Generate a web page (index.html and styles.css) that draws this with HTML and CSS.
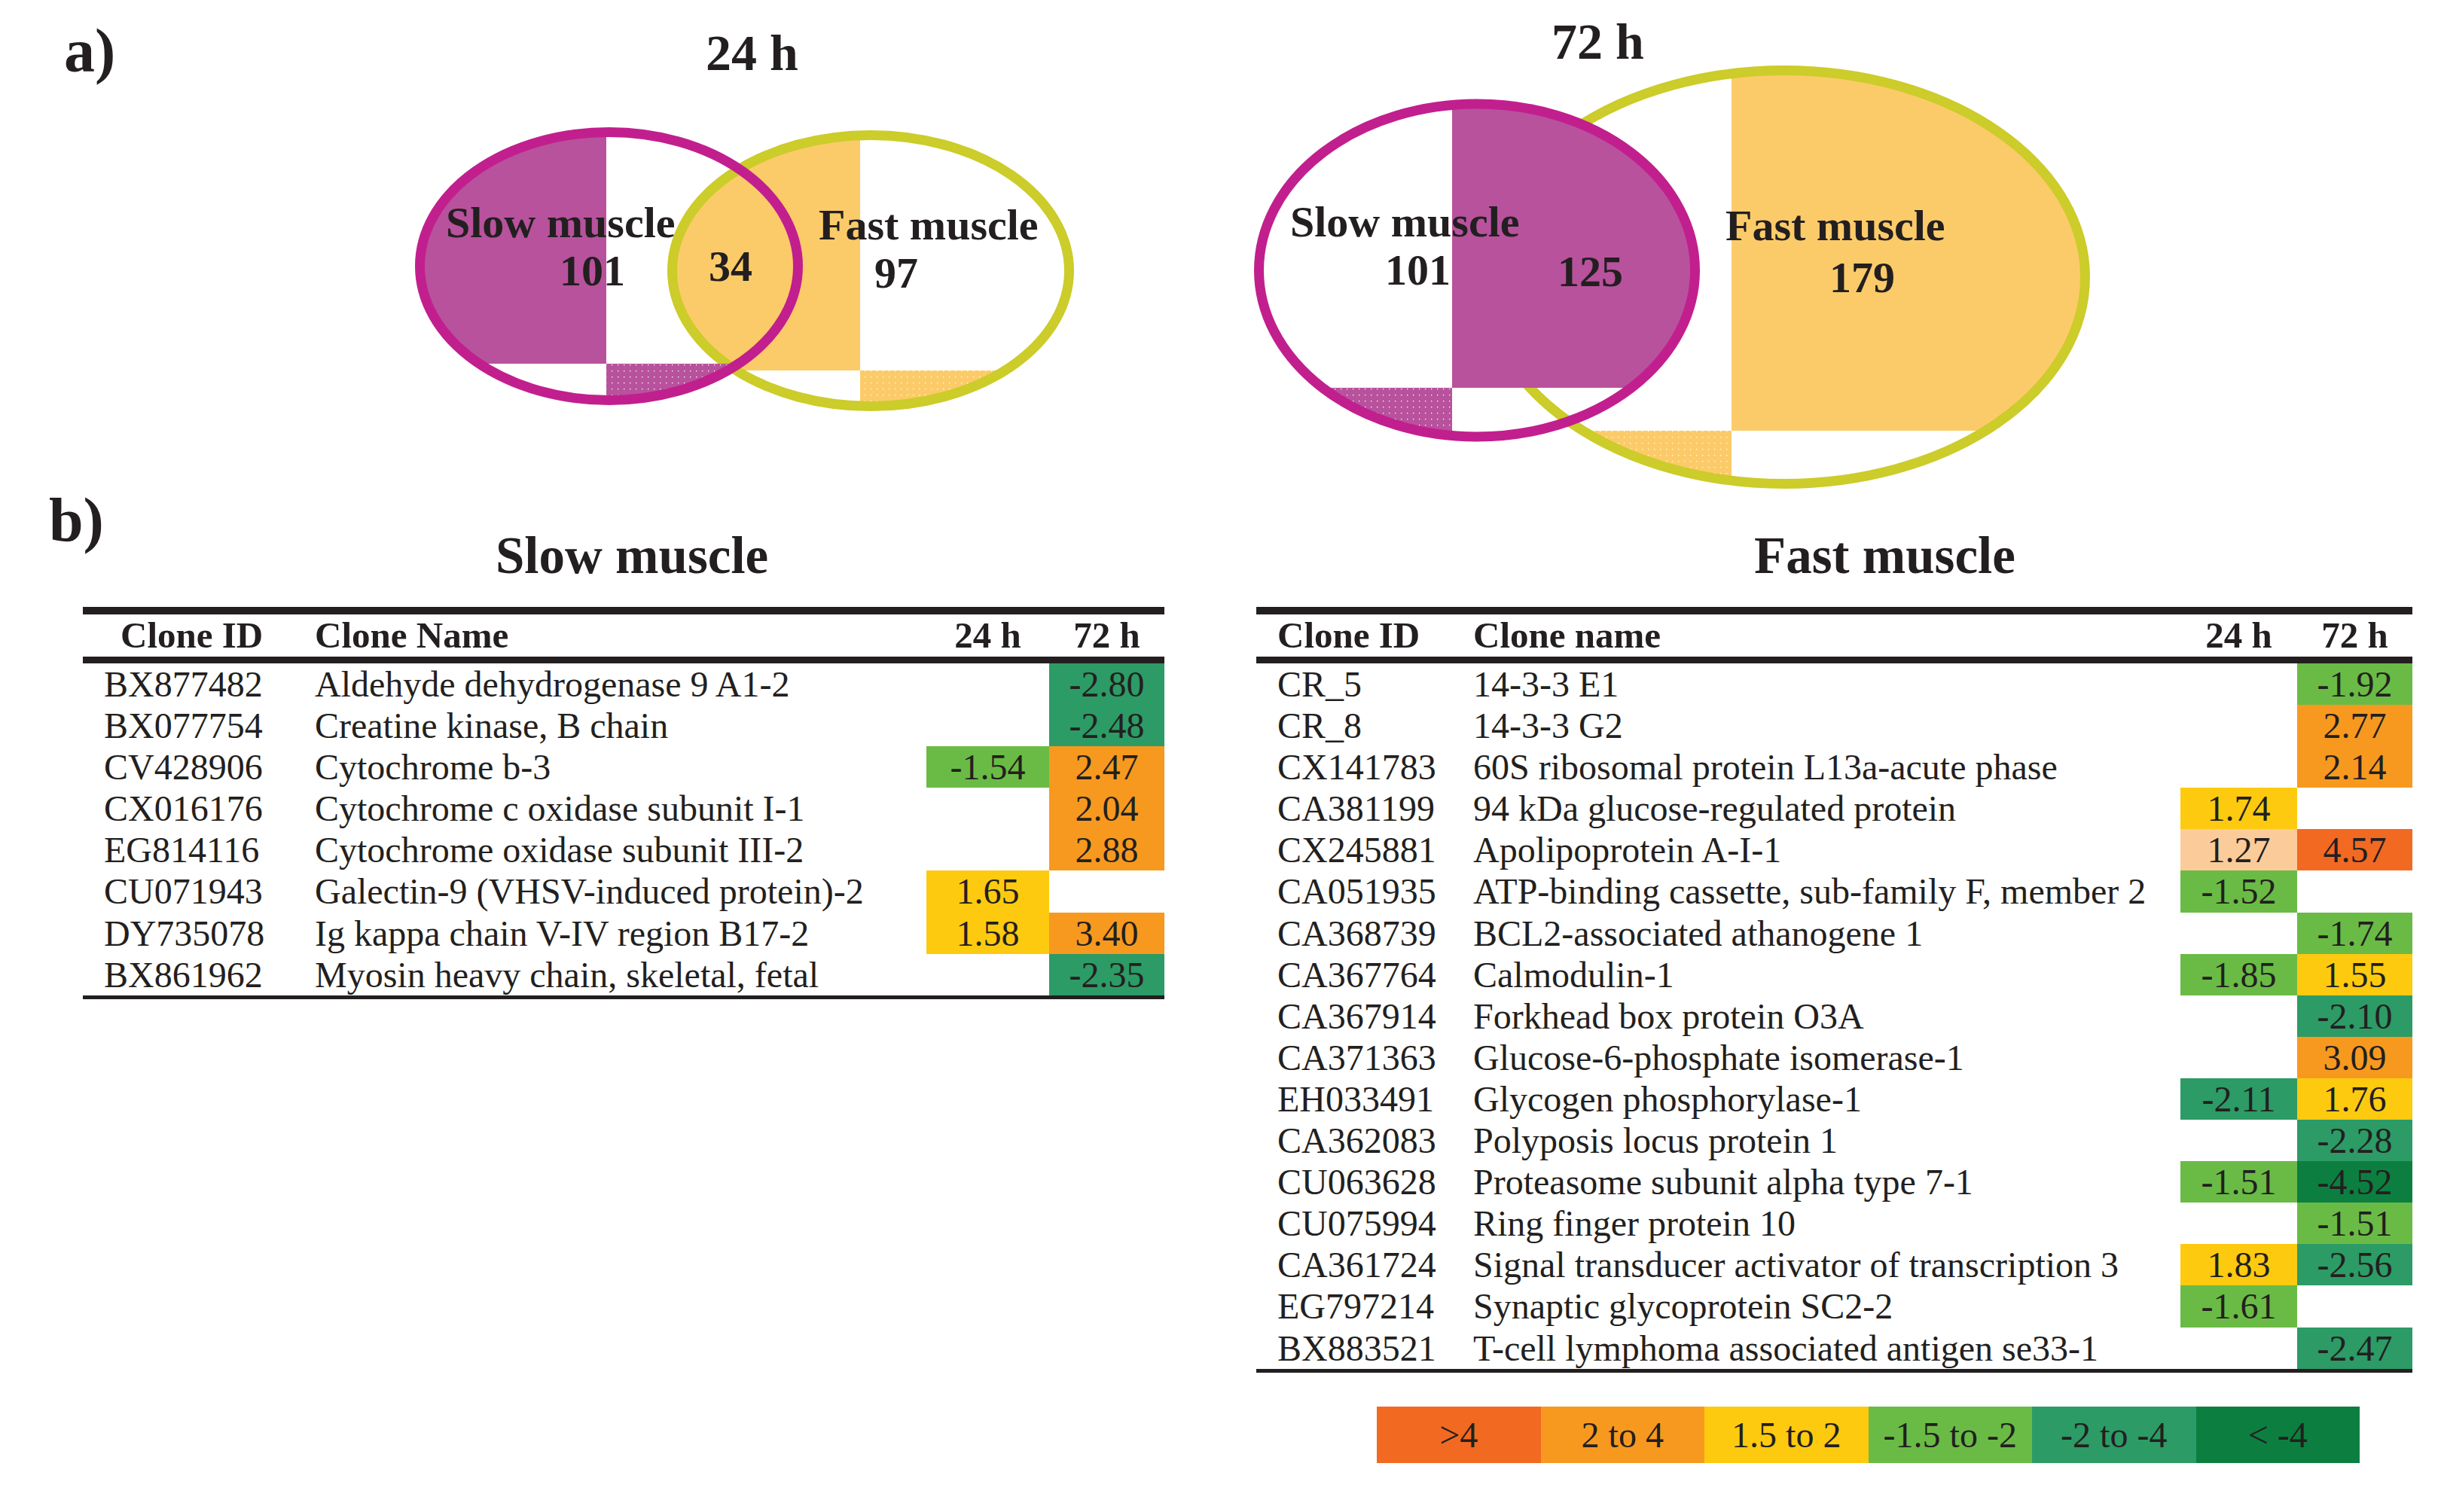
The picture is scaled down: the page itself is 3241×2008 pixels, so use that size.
FILE: index.html
```html
<!DOCTYPE html>
<html lang="en">
<head>
<meta charset="utf-8">
<title>Venn diagrams and gene expression tables</title>
<link rel="stylesheet" href="styles.css">
</head>
<body>
<div class="page">
  <section class="row-a">
    <div class="panel-label label-a">a)</div>

    <figure class="venn venn-24">
      <div class="venn-title">24 h</div>
      <div class="venn-canvas">
        <svg width="924" height="455" viewBox="540 104 924 455" xmlns="http://www.w3.org/2000/svg">
          <defs>
            <clipPath id="c24s"><ellipse cx="808.5" cy="353.5" rx="251" ry="178"/></clipPath>
            <clipPath id="c24f"><ellipse cx="1156" cy="359.5" rx="263.5" ry="180"/></clipPath>
            <pattern id="dm24" x="0" y="0" width="8" height="8" patternUnits="userSpaceOnUse">
              <rect width="8" height="8" fill="#B8529D"/>
              <rect x="4" y="4" width="1.3" height="1.3" fill="#ffffff"/>
            </pattern>
            <pattern id="do24" x="0" y="0" width="8" height="8" patternUnits="userSpaceOnUse">
              <rect width="8" height="8" fill="#FCCB69"/>
              <rect x="4" y="4" width="1.3" height="1.3" fill="#ffffff"/>
            </pattern>
          </defs>
          <g clip-path="url(#c24f)">
            <rect x="880" y="160" width="262" height="332" fill="#FCCB69"/>
            <rect x="1142" y="492" width="300" height="70" fill="url(#do24)"/>
          </g>
          <ellipse cx="1156" cy="359.5" rx="263.5" ry="180" fill="none" stroke="#CCCC2A" stroke-width="13"/>
          <g clip-path="url(#c24s)">
            <rect x="545" y="160" width="260" height="323" fill="#B8529D"/>
            <rect x="805" y="483" width="280" height="70" fill="url(#dm24)"/>
          </g>
          <ellipse cx="808.5" cy="353.5" rx="251" ry="178" fill="none" stroke="#C21F8E" stroke-width="13"/>
        </svg>
        <span class="venn-label l24-slow">Slow muscle</span>
        <span class="venn-label l24-slow-n">101</span>
        <span class="venn-label l24-both">34</span>
        <span class="venn-label l24-fast">Fast muscle</span>
        <span class="venn-label l24-fast-n">97</span>
      </div>
    </figure>

    <figure class="venn venn-72">
      <div class="venn-title">72 h</div>
      <div class="venn-canvas">
        <svg width="1150" height="562" viewBox="1650 89 1150 562" xmlns="http://www.w3.org/2000/svg">
          <defs>
            <clipPath id="c72s"><ellipse cx="1961" cy="359" rx="289.5" ry="221"/></clipPath>
            <clipPath id="c72f"><ellipse cx="2369" cy="368" rx="399.5" ry="274.5"/></clipPath>
            <pattern id="dm72" x="0" y="0" width="8" height="8" patternUnits="userSpaceOnUse">
              <rect width="8" height="8" fill="#B8529D"/>
              <rect x="4" y="4" width="1.3" height="1.3" fill="#ffffff"/>
            </pattern>
            <pattern id="do72" x="0" y="0" width="8" height="8" patternUnits="userSpaceOnUse">
              <rect width="8" height="8" fill="#FCCB69"/>
              <rect x="4" y="4" width="1.3" height="1.3" fill="#ffffff"/>
            </pattern>
          </defs>
          <g clip-path="url(#c72f)">
            <rect x="2299" y="80" width="490" height="492" fill="#FCCB69"/>
            <rect x="1960" y="572" width="339" height="90" fill="url(#do72)"/>
          </g>
          <ellipse cx="2369" cy="368" rx="399.5" ry="274.5" fill="none" stroke="#CCCC2A" stroke-width="13"/>
          <g clip-path="url(#c72s)">
            <rect x="1928" y="125" width="345" height="390" fill="#B8529D"/>
            <rect x="1660" y="515" width="268" height="80" fill="url(#dm72)"/>
          </g>
          <ellipse cx="1961" cy="359" rx="289.5" ry="221" fill="none" stroke="#C21F8E" stroke-width="13"/>
        </svg>
        <span class="venn-label l72-slow">Slow muscle</span>
        <span class="venn-label l72-slow-n">101</span>
        <span class="venn-label l72-both">125</span>
        <span class="venn-label l72-fast">Fast muscle</span>
        <span class="venn-label l72-fast-n">179</span>
      </div>
    </figure>
  </section>

  <section class="row-b">
    <div class="panel-label label-b">b)</div>

    <div class="block block-slow">
      <div class="block-title">Slow muscle</div>
      <div class="gene-table">
        <div class="row head"><span class="cell-id">Clone ID</span><span>Clone Name</span><span class="val">24 h</span><span class="val">72 h</span></div>
        <div class="row"><span class="cell-id">BX877482</span><span>Aldehyde dehydrogenase 9 A1-2</span><span class="val"></span><span class="val c-g2">-2.80</span></div>
        <div class="row"><span class="cell-id">BX077754</span><span>Creatine kinase, B chain</span><span class="val"></span><span class="val c-g2">-2.48</span></div>
        <div class="row"><span class="cell-id">CV428906</span><span>Cytochrome b-3</span><span class="val c-g1">-1.54</span><span class="val c-o2">2.47</span></div>
        <div class="row"><span class="cell-id">CX016176</span><span>Cytochrome c oxidase subunit I-1</span><span class="val"></span><span class="val c-o2">2.04</span></div>
        <div class="row"><span class="cell-id">EG814116</span><span>Cytochrome oxidase subunit III-2</span><span class="val"></span><span class="val c-o2">2.88</span></div>
        <div class="row"><span class="cell-id">CU071943</span><span>Galectin-9 (VHSV-induced protein)-2</span><span class="val c-y">1.65</span><span class="val"></span></div>
        <div class="row"><span class="cell-id">DY735078</span><span>Ig kappa chain V-IV region B17-2</span><span class="val c-y">1.58</span><span class="val c-o2">3.40</span></div>
        <div class="row"><span class="cell-id">BX861962</span><span>Myosin heavy chain, skeletal, fetal</span><span class="val"></span><span class="val c-g2">-2.35</span></div>
      </div>
    </div>

    <div class="block block-fast">
      <div class="block-title">Fast muscle</div>
      <div class="gene-table">
        <div class="row head"><span class="cell-id">Clone ID</span><span>Clone name</span><span class="val">24 h</span><span class="val">72 h</span></div>
        <div class="row"><span class="cell-id">CR_5</span><span>14-3-3 E1</span><span class="val"></span><span class="val c-g1">-1.92</span></div>
        <div class="row"><span class="cell-id">CR_8</span><span>14-3-3 G2</span><span class="val"></span><span class="val c-o2">2.77</span></div>
        <div class="row"><span class="cell-id">CX141783</span><span>60S ribosomal protein L13a-acute phase</span><span class="val"></span><span class="val c-o2">2.14</span></div>
        <div class="row"><span class="cell-id">CA381199</span><span>94 kDa glucose-regulated protein</span><span class="val c-y">1.74</span><span class="val"></span></div>
        <div class="row"><span class="cell-id">CX245881</span><span>Apolipoprotein A-I-1</span><span class="val c-p">1.27</span><span class="val c-o1">4.57</span></div>
        <div class="row"><span class="cell-id">CA051935</span><span>ATP-binding cassette, sub-family F, member 2</span><span class="val c-g1">-1.52</span><span class="val"></span></div>
        <div class="row"><span class="cell-id">CA368739</span><span>BCL2-associated athanogene 1</span><span class="val"></span><span class="val c-g1">-1.74</span></div>
        <div class="row"><span class="cell-id">CA367764</span><span>Calmodulin-1</span><span class="val c-g1">-1.85</span><span class="val c-y">1.55</span></div>
        <div class="row"><span class="cell-id">CA367914</span><span>Forkhead box protein O3A</span><span class="val"></span><span class="val c-g2">-2.10</span></div>
        <div class="row"><span class="cell-id">CA371363</span><span>Glucose-6-phosphate isomerase-1</span><span class="val"></span><span class="val c-o2">3.09</span></div>
        <div class="row"><span class="cell-id">EH033491</span><span>Glycogen phosphorylase-1</span><span class="val c-g2">-2.11</span><span class="val c-y">1.76</span></div>
        <div class="row"><span class="cell-id">CA362083</span><span>Polyposis locus protein 1</span><span class="val"></span><span class="val c-g2">-2.28</span></div>
        <div class="row"><span class="cell-id">CU063628</span><span>Proteasome subunit alpha type 7-1</span><span class="val c-g1">-1.51</span><span class="val c-g3">-4.52</span></div>
        <div class="row"><span class="cell-id">CU075994</span><span>Ring finger protein 10</span><span class="val"></span><span class="val c-g1">-1.51</span></div>
        <div class="row"><span class="cell-id">CA361724</span><span>Signal transducer activator of transcription 3</span><span class="val c-y">1.83</span><span class="val c-g2">-2.56</span></div>
        <div class="row"><span class="cell-id">EG797214</span><span>Synaptic glycoprotein SC2-2</span><span class="val c-g1">-1.61</span><span class="val"></span></div>
        <div class="row"><span class="cell-id">BX883521</span><span>T-cell lymphoma associated antigen se33-1</span><span class="val"></span><span class="val c-g2">-2.47</span></div>
      </div>
      <div class="legend">
        <span class="c-o1">&gt;4</span>
        <span class="c-o2">2 to 4</span>
        <span class="c-y">1.5 to 2</span>
        <span class="c-g1">-1.5 to -2</span>
        <span class="c-g2">-2 to -4</span>
        <span class="c-g3">&lt; -4</span>
      </div>
    </div>
  </section>
</div>
</body>
</html>
```

FILE: styles.css
```css
html, body {
  margin: 0;
  padding: 0;
  background: #ffffff;
}

body {
  color: #231F20;
  font-family: "Liberation Serif", "Times New Roman", serif;
}

.page {
  width: 3241px;
  height: 2008px;
  overflow: hidden;
}

/* ---------- panel a ---------- */
.row-a {
  display: flex;
  align-items: flex-start;
  height: 650px;
}

.panel-label {
  font-weight: bold;
  font-size: 82px;
  line-height: 82px;
  white-space: nowrap;
}

.label-a {
  width: 540px;
  flex: none;
  box-sizing: border-box;
  padding: 27px 0 0 85px;
}

.venn {
  margin: 0;
  flex: none;
  display: flex;
  flex-direction: column;
  align-items: flex-start;
}

.venn-24 {
  width: 924px;
}

.venn-72 {
  width: 1150px;
  margin-left: 186px;
}

.venn-title {
  font-weight: bold;
  font-size: 68px;
  line-height: 68px;
  white-space: nowrap;
}

.venn-24 .venn-title {
  margin: 36px 0 0 397px;
}

.venn-72 .venn-title {
  margin: 21px 0 0 410px;
}

.venn-canvas {
  position: relative;
}

.venn-canvas svg {
  display: block;
  overflow: visible;
}

.venn-label {
  position: absolute;
  font-weight: bold;
  font-size: 58px;
  line-height: 46px;
  white-space: nowrap;
}

/* label positions on the 24 h diagram */
.l24-slow   { left: 52px;  top: 169px; }
.l24-slow-n { left: 203px; top: 233px; }
.l24-both   { left: 401px; top: 227px; }
.l24-fast   { left: 547px; top: 172px; }
.l24-fast-n { left: 621px; top: 236px; }

/* label positions on the 72 h diagram */
.l72-slow   { left: 63px;  top: 183px; }
.l72-slow-n { left: 189px; top: 247px; }
.l72-both   { left: 418px; top: 249px; }
.l72-fast   { left: 641px; top: 188px; }
.l72-fast-n { left: 779px; top: 257px; }

/* ---------- panel b ---------- */
.row-b {
  display: flex;
  align-items: flex-start;
}

.label-b {
  width: 110px;
  flex: none;
  box-sizing: border-box;
  padding-left: 65px;
}

.block {
  flex: none;
  padding-top: 54px;
}

.block-slow {
  width: 1436px;
}

.block-fast {
  width: 1535px;
  margin-left: 122px;
}

.block-title {
  font-weight: bold;
  font-size: 69px;
  line-height: 69px;
  white-space: nowrap;
}

.block-slow .block-title {
  padding-left: 548px;
}

.block-fast .block-title {
  padding-left: 661px;
}

.gene-table {
  margin-top: 33px;
  border-top: 10px solid #231F20;
  border-bottom: 5px solid #231F20;
}

.row {
  display: grid;
  height: 55.1px;
  font-size: 48px;
  line-height: 55.1px;
  white-space: nowrap;
}

.block-slow .row {
  grid-template-columns: 308px 812px 163px 153px;
}

.block-fast .row {
  grid-template-columns: 288px 939px 155px 153px;
}

.row.head {
  height: 56px;
  line-height: 56px;
  font-size: 49px;
  font-weight: bold;
  border-bottom: 9px solid #231F20;
}

.block-slow .cell-id {
  padding-left: 28px;
}

.block-slow .head .cell-id {
  padding-left: 50px;
}

.block-fast .cell-id {
  padding-left: 28px;
}

.val {
  text-align: center;
}

/* colour scale */
.c-o1 { background: #F26922; }
.c-o2 { background: #F7991F; }
.c-y  { background: #FDCA10; }
.c-p  { background: #FCCB9A; }
.c-g1 { background: #6ABB45; }
.c-g2 { background: #2C9B66; }
.c-g3 { background: #0C7F40; }

/* legend */
.legend {
  display: flex;
  margin: 45px 0 0 160px;
}

.legend span {
  width: 217.5px;
  height: 75px;
  line-height: 75px;
  text-align: center;
  font-size: 48px;
  white-space: nowrap;
}
```
